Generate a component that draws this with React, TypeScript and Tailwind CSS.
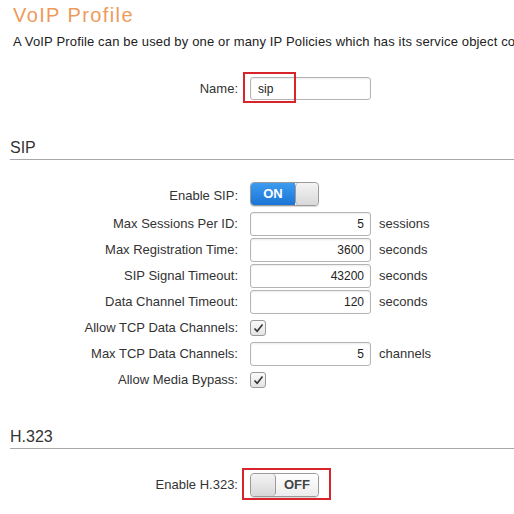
import React from 'react';

const font = { fontFamily: '"Liberation Sans", Arial, sans-serif' };

const Toggle = ({ on }: { on: boolean }) => (
  <div className="flex h-[24px] w-[69px] overflow-hidden rounded-[4px] border border-[#9a9a9a] shadow-[0_1px_1px_rgba(0,0,0,0.15)]">
    {on ? (
      <>
        <div className="flex w-[44px] items-center justify-center bg-gradient-to-b from-[#3c9cf0] to-[#1b74d6] text-[13px] font-bold text-white">
          ON
        </div>
        <div className="flex-1 rounded-[4px] border-l border-[#9a9a9a] bg-gradient-to-b from-[#f4f4f4] to-[#d8d8d8]" />
      </>
    ) : (
      <>
        <div className="w-[25px] rounded-[4px] border-r border-[#9a9a9a] bg-gradient-to-b from-[#f4f4f4] to-[#d8d8d8]" />
        <div className="flex flex-1 items-center justify-center bg-gradient-to-b from-[#ffffff] to-[#ececec] text-[13px] font-bold text-[#444]">
          OFF
        </div>
      </>
    )}
  </div>
);

const NumInput = ({ value }: { value: string }) => (
  <div className="flex h-[24px] w-[121px] items-center justify-end rounded-[3px] border border-[#b4b4b4] bg-white pr-[6px] text-[12px] text-[#222] shadow-[inset_0_1px_2px_rgba(0,0,0,0.08)]">
    {value}
  </div>
);

const Check = () => (
  <div className="flex h-[16px] w-[16px] items-center justify-center rounded-[3px] border border-[#9a9a9a] bg-gradient-to-b from-[#fafafa] to-[#e4e4e4]">
    <svg width="11" height="10" viewBox="0 0 11 10">
      <path d="M1.5 5.5 L4.2 8.2 L9.5 1.5" fill="none" stroke="#333" strokeWidth="1.6" />
    </svg>
  </div>
);

const Row = ({ label, children, unit, h = 'h-[26px]' }: { label: string; children: React.ReactNode; unit?: string; h?: string }) => (
  <div className={`flex items-center ${h}`}>
    <div className="w-[240px] pr-[2px] text-right text-[13px] text-[#333]">{label}</div>
    <div className="ml-[10px]">{children}</div>
    {unit && <div className="ml-[8px] text-[13px] text-[#333]">{unit}</div>}
  </div>
);

const Section = ({ title }: { title: string }) => (
  <div className="ml-[10px] border-b border-[#a8a8a8] pb-[3px] text-[16px] leading-[16px] text-[#333]">{title}</div>
);

export default function App() {
  return (
    <div className="h-[514px] w-[514px] overflow-hidden bg-white" style={font}>
      <div className="pl-[13px] pt-[3px] text-[20px] leading-[24px] tracking-[1.4px] text-[#ef9a5a]">VoIP Profile</div>
      <div className="mt-[5px] whitespace-nowrap pl-[13px] text-[13px] tracking-[0.15px] text-[#222]">
        A VoIP Profile can be used by one or many IP Policies which has its service object contains VoIP services.
      </div>

      <div className="relative mt-[25px]">
        <Row label="Name:" h="h-[24px]">
          <div className="flex h-[23px] w-[121px] items-center rounded-[3px] border border-[#b4b4b4] bg-white pl-[7px] text-[12px] text-[#222] shadow-[inset_0_1px_2px_rgba(0,0,0,0.08)]">
            sip
          </div>
        </Row>
        <div className="absolute left-[243px] top-[-5px] h-[31px] w-[53px] border-2 border-[#d8252b]" />
      </div>

      <div className="mt-[39px]">
        <Section title="SIP" />
      </div>

      <div className="mt-[22px]">
        <Row label="Enable SIP:" h="h-[29px]">
          <div className="pb-[4px]">
            <Toggle on />
          </div>
        </Row>
        <Row label="Max Sessions Per ID:" unit="sessions">
          <NumInput value="5" />
        </Row>
        <Row label="Max Registration Time:" unit="seconds">
          <NumInput value="3600" />
        </Row>
        <Row label="SIP Signal Timeout:" unit="seconds">
          <NumInput value="43200" />
        </Row>
        <Row label="Data Channel Timeout:" unit="seconds">
          <NumInput value="120" />
        </Row>
        <Row label="Allow TCP Data Channels:">
          <Check />
        </Row>
        <Row label="Max TCP Data Channels:" unit="channels">
          <NumInput value="5" />
        </Row>
        <Row label="Allow Media Bypass:">
          <Check />
        </Row>
      </div>

      <div className="mt-[36px]">
        <Section title="H.323" />
      </div>

      <div className="relative mt-[23px]">
        <Row label="Enable H.323:">
          <Toggle on={false} />
        </Row>
        <div className="absolute left-[242px] top-[-4px] h-[32px] w-[89px] border-2 border-[#d8252b]" />
      </div>
    </div>
  );
}
